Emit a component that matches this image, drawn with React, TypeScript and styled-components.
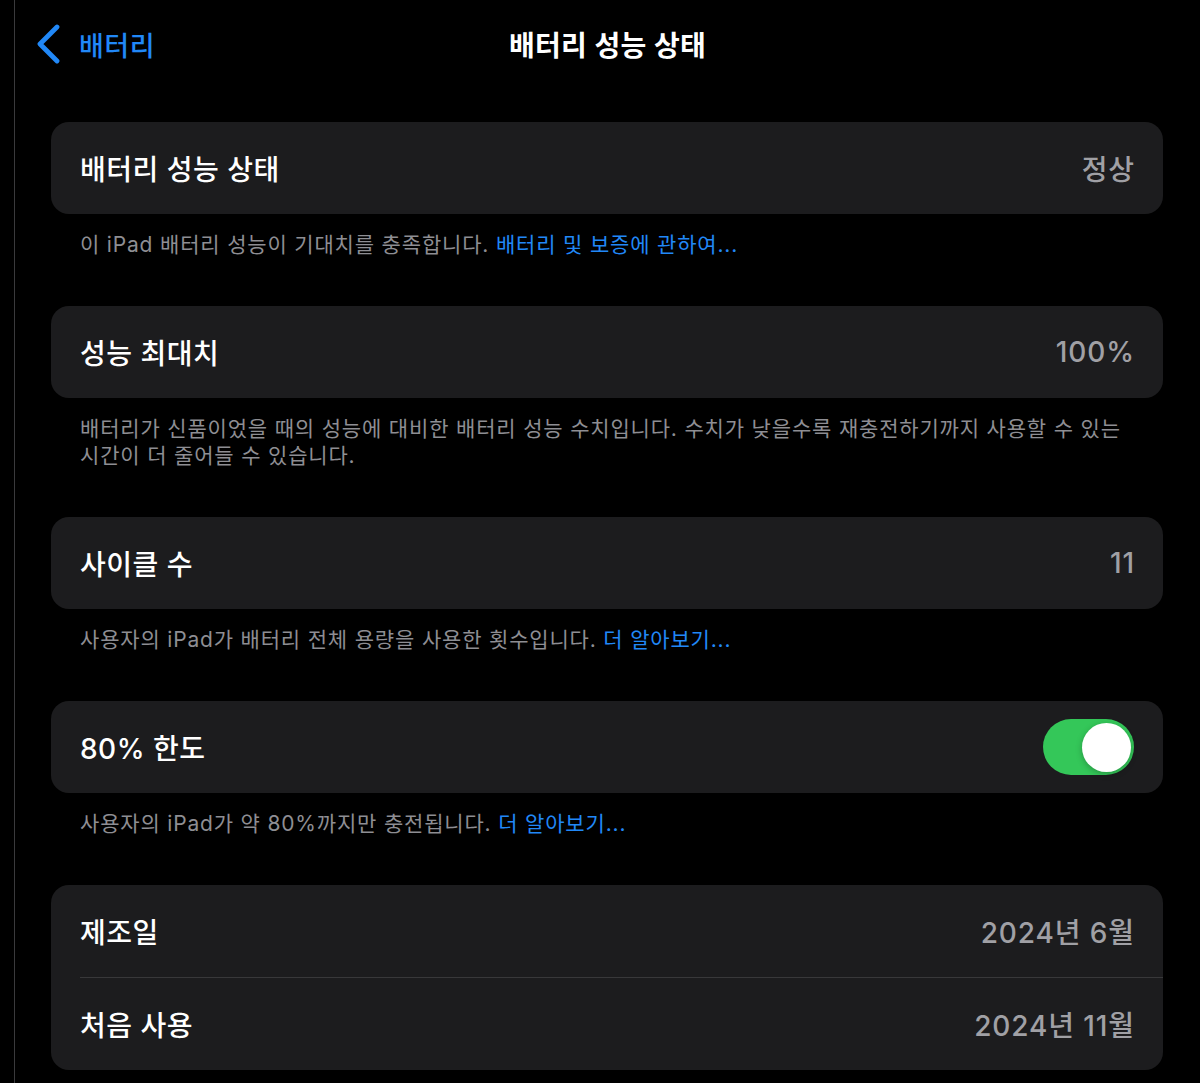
import React from 'react';
import styled, { createGlobalStyle } from 'styled-components';

const GlobalStyle = createGlobalStyle`
  html, body {
    margin: 0;
    padding: 0;
    background: #000;
  }
  body {
    font-family: Inter, 'Noto Sans CJK KR', 'Noto Sans', sans-serif;
    -webkit-font-smoothing: antialiased;
  }
`;

const BLUE = '#2188f7';

const Shell = styled.div`
  margin-left: 14px;
  border-left: 1px solid #3a3a3c;
  min-height: 1083px;
  box-sizing: border-box;
  color: #fff;
`;

const NavBar = styled.header`
  height: 88px;
  display: grid;
  grid-template-columns: 1fr auto 1fr;
  align-items: center;
`;

const BackButton = styled.div`
  display: flex;
  align-items: center;
  gap: 17px;
  padding-left: 21px;
  color: ${BLUE};
  font-size: 27px;
  font-weight: 500;
  letter-spacing: 0.5px;
`;

const Title = styled.h1`
  margin: 0;
  font-size: 28px;
  font-weight: 600;
  letter-spacing: 0.3px;
`;

const Content = styled.main`
  padding: 34px 37px 0 36px;
`;

const Card = styled.section`
  background: #1c1c1e;
  border-radius: 18px;
  overflow: hidden;
`;

const Row = styled.div<{ $divider?: boolean }>`
  height: 92px;
  display: flex;
  align-items: center;
  justify-content: space-between;
  padding: 0 29px;
  box-sizing: border-box;
  ${p =>
    p.$divider &&
    `
    height: 93px;
    border-top: 1px solid #38383a;
    margin-left: 29px;
    padding-left: 0;
  `}
`;

const Label = styled.span`
  font-size: 28px;
  font-weight: 500;
  letter-spacing: 0.5px;
`;

const Value = styled.span`
  font-size: 28px;
  font-weight: 500;
  color: #a0a0a5;
  letter-spacing: 0.9px;
  margin-right: -1px;
`;

const Footer = styled.div`
  padding: 17px 29px 48px;
  font-size: 21px;
  color: #8e8e93;
  letter-spacing: 0.82px;
`;

const Line = styled.p`
  margin: 0;
  height: 27px;
  line-height: 27px;
  white-space: nowrap;
`;

const Link = styled.span`
  color: ${BLUE};
`;

const Toggle = styled.div<{ $on: boolean }>`
  width: 91px;
  height: 56px;
  border-radius: 28px;
  background: ${p => (p.$on ? '#34c759' : '#39393d')};
  display: flex;
  align-items: center;
  justify-content: ${p => (p.$on ? 'flex-end' : 'flex-start')};
  padding: 0 3px;
  box-sizing: border-box;
`;

const Knob = styled.div`
  width: 49px;
  height: 49px;
  border-radius: 50%;
  background: #fff;
  box-shadow: 0 2px 6px rgba(0, 0, 0, 0.25);
`;

const Chevron = () => (
  <svg width="26" height="40" viewBox="0 0 26 40">
    <polyline
      points="21,3 4,20 21,37"
      fill="none"
      stroke={BLUE}
      strokeWidth="4.8"
      strokeLinecap="round"
      strokeLinejoin="round"
    />
  </svg>
);

export default function App() {
  return (
    <>
      <GlobalStyle />
      <Shell>
        <NavBar>
          <BackButton>
            <Chevron />
            <span>배터리</span>
          </BackButton>
          <Title>배터리 성능 상태</Title>
          <div />
        </NavBar>
        <Content>
          <Card>
            <Row>
              <Label>배터리 성능 상태</Label>
              <Value>정상</Value>
            </Row>
          </Card>
          <Footer>
            <Line>
              이 iPad 배터리 성능이 기대치를 충족합니다. <Link>배터리 및 보증에 관하여...</Link>
            </Line>
          </Footer>

          <Card>
            <Row>
              <Label>성능 최대치</Label>
              <Value>100%</Value>
            </Row>
          </Card>
          <Footer>
            <Line>
              배터리가 신품이었을 때의 성능에 대비한 배터리 성능 수치입니다. 수치가 낮을수록 재충전하기까지 사용할 수 있는
            </Line>
            <Line>시간이 더 줄어들 수 있습니다.</Line>
          </Footer>

          <Card>
            <Row>
              <Label>사이클 수</Label>
              <Value>11</Value>
            </Row>
          </Card>
          <Footer>
            <Line>
              사용자의 iPad가 배터리 전체 용량을 사용한 횟수입니다. <Link>더 알아보기...</Link>
            </Line>
          </Footer>

          <Card>
            <Row>
              <Label>80% 한도</Label>
              <Toggle $on>
                <Knob />
              </Toggle>
            </Row>
          </Card>
          <Footer>
            <Line>
              사용자의 iPad가 약 80%까지만 충전됩니다. <Link>더 알아보기...</Link>
            </Line>
          </Footer>

          <Card>
            <Row>
              <Label>제조일</Label>
              <Value>2024년 6월</Value>
            </Row>
            <Row $divider>
              <Label>처음 사용</Label>
              <Value>2024년 11월</Value>
            </Row>
          </Card>
        </Content>
      </Shell>
    </>
  );
}
